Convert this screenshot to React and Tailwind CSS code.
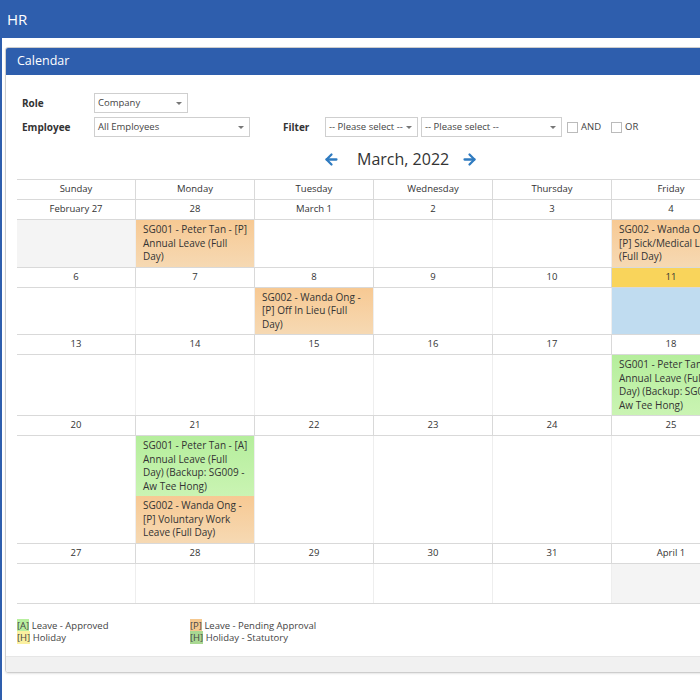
import { ArrowLeft, ArrowRight } from 'lucide-react'

const ORANGE = 'bg-gradient-to-b from-[#f7c993] to-[#f6d9b3]'
const GREEN = 'bg-gradient-to-b from-[#b5ee9c] to-[#caf4b3]'

// lines ya cortadas como las muestra el calendario
const PETER_A = ['SG001 - Peter Tan - [A]', 'Annual Leave (Full', 'Day) (Backup: SG009 -', 'Aw Tee Hong)']

const weeks = [
  {
    days: ['February 27', '28', 'March 1', '2', '3', '4', '5'],
    cells: [
      { bg: 'bg-[#f4f4f4]' },
      { events: [{ c: ORANGE, t: ['SG001 - Peter Tan - [P]', 'Annual Leave (Full', 'Day)'] }] },
      {}, {}, {},
      { events: [{ c: ORANGE, t: ['SG002 - Wanda Ong -', '[P] Sick/Medical Leave', '(Full Day)'] }] },
      {},
    ],
  },
  {
    days: ['6', '7', '8', '9', '10', '11', '12'],
    today: 5,
    cells: [
      {}, {},
      { events: [{ c: ORANGE, t: ['SG002 - Wanda Ong -', '[P] Off In Lieu (Full', 'Day)'] }] },
      {}, {},
      { bg: 'bg-[#c0dcf0]' },
      {},
    ],
  },
  {
    days: ['13', '14', '15', '16', '17', '18', '19'],
    cells: [
      {}, {}, {}, {}, {},
      { events: [{ c: GREEN, t: PETER_A }] },
      {},
    ],
  },
  {
    days: ['20', '21', '22', '23', '24', '25', '26'],
    cells: [
      {},
      {
        events: [
          { c: GREEN, t: PETER_A },
          { c: ORANGE, t: ['SG002 - Wanda Ong -', '[P] Voluntary Work', 'Leave (Full Day)'] },
        ],
      },
      {}, {}, {}, {}, {},
    ],
  },
  {
    days: ['27', '28', '29', '30', '31', 'April 1', 'April 2'],
    cells: [{}, {}, {}, {}, {}, { bg: 'bg-[#f4f4f4]' }, { bg: 'bg-[#f4f4f4]' }],
  },
]

const dayNames = ['Sunday', 'Monday', 'Tuesday', 'Wednesday', 'Thursday', 'Friday', 'Saturday']

const Select = ({ value, w }) => (
  <div className={`${w} h-[20px] border border-[#cfcfcf] bg-white flex items-center justify-between pl-[3px] pr-[5px] text-[9.5px] text-[#444]`}>
    <span>{value}</span>
    <span className="w-0 h-0 border-l-[3px] border-r-[3px] border-t-[3px] border-l-transparent border-r-transparent border-t-[#777]" />
  </div>
)

const Check = () => <span className="block w-[11px] h-[11px] border border-[#bbb] bg-white" />

export default function App() {
  return (
    <div className="w-[700px] h-[700px] overflow-hidden bg-white font-['Open_Sans',sans-serif] text-[#333]">
      {/* barra superior */}
      <div className="h-[38px] bg-[#2e5ead] flex items-center px-[7px] text-white text-[15px]">HR</div>

      <div className="w-[920px] border-l-2 border-[#2e5ead] pt-[9px] pl-[3px] h-[662px]">
        <div className="w-[880px] border border-[#cdcdcd] rounded-[3px] shadow-[0_1px_2px_rgba(0,0,0,0.1)]">
          {/* Panel header */}
          <div className="h-[27px] bg-[#2e5ead] rounded-t-[2px] flex items-center pl-[11px] text-white text-[12.5px]">
            Calendar
          </div>

          <div className="px-[11px] pt-[18px]">
            {/* Filtros */}
            <div className="flex items-center h-[20px]">
              <span className="w-[77px] pl-[5px] text-[10px] font-bold">Role</span>
              <Select value="Company" w="w-[94px]" />
            </div>
            <div className="flex items-center h-[20px] mt-[4px]">
              <span className="w-[77px] pl-[5px] text-[10px] font-bold">Employee</span>
              <Select value="All Employees" w="w-[156px]" />
              <span className="ml-[33px] w-[42px] text-[10px] font-bold">Filter</span>
              <Select value="-- Please select --" w="w-[93px]" />
              <div className="ml-[3px]"><Select value="-- Please select --" w="w-[141px]" /></div>
              <div className="flex items-center gap-[3px] ml-[5px] text-[9.5px] text-[#444]">
                <Check /><span>AND</span>
                <span className="w-[4px]" />
                <Check /><span>OR</span>
              </div>
            </div>

            {/* Navegación de mes */}
            <div className="flex items-center h-[24px] mt-[10px] pl-[306px]">
              <ArrowLeft size={17} strokeWidth={3.2} className="text-[#2f7bc0]" />
              <span className="ml-[17px] mr-[12px] text-[16px] text-[#333]">March, 2022</span>
              <ArrowRight size={17} strokeWidth={3.2} className="text-[#2f7bc0]" />
            </div>

            {/* Calendario */}
            <div className="mt-[8px] border-t border-[#d9d9d9] w-[833px]">
              <div className="grid grid-cols-[repeat(7,119px)] border-b border-[#d9d9d9]">
                {dayNames.map((d) => (
                  <div key={d} className="h-[19px] flex items-center justify-center text-[9.5px] border-r border-[#d9d9d9]">{d}</div>
                ))}
              </div>
              {weeks.map((week, wi) => (
                <div key={wi}>
                  <div className="grid grid-cols-[repeat(7,119px)] border-b border-[#d9d9d9]">
                    {week.days.map((d, di) => (
                      <div
                        key={di}
                        className={`h-[19px] flex items-center justify-center text-[9.5px] border-r border-[#d9d9d9] ${week.today === di ? 'bg-[#f9d45b]' : ''}`}
                      >
                        {d}
                      </div>
                    ))}
                  </div>
                  <div className="grid grid-cols-[repeat(7,119px)] border-b border-[#d9d9d9]">
                    {week.cells.map((cell, ci) => (
                      <div key={ci} className={`min-h-[39px] flex flex-col border-r border-[#eeeeee] ${cell.bg || ''}`}>
                        {(cell.events || []).map((ev, ei) => (
                          <div key={ei} className={`${ev.c} grow shrink-0 pl-[7px] py-[3px] text-[10px] leading-[13.5px] text-[#333] whitespace-nowrap overflow-hidden`}>
                            {ev.t.map((line, li) => <div key={li}>{line}</div>)}
                          </div>
                        ))}
                      </div>
                    ))}
                  </div>
                </div>
              ))}
            </div>

            {/* Leyenda */}
            <div className="grid grid-cols-[173px_200px] mt-[16px] text-[9.5px] leading-[12px] text-[#444] pb-[12px]">
              <div><span className="bg-[#b8ef9f]">[A]</span> Leave - Approved</div>
              <div><span className="bg-[#f5c88f]">[P]</span> Leave - Pending Approval</div>
              <div><span className="bg-[#fbf0a0]">[H]</span> Holiday</div>
              <div><span className="bg-[#a9d892]">[H]</span> Holiday - Statutory</div>
            </div>
          </div>

          <div className="h-[16px] bg-[#f1f1f1] border-t border-[#e6e6e6] rounded-b-[2px]" />
        </div>
      </div>
    </div>
  )
}
